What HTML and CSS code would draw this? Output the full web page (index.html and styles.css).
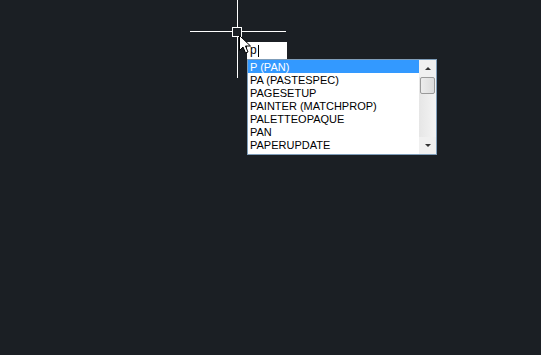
FILE: index.html
```html
<!DOCTYPE html>
<html lang="en">
<head>
  <meta charset="UTF-8" />
  <title>Drawing - Command Input</title>
  <link rel="stylesheet" href="styles.css">
</head>
<body>
  <div class="canvas">
    <div class="cross-h"></div>
    <div class="cross-v"></div>
    <div class="pickbox"></div>

    <div class="command">
      <div class="cmd-input">p<span class="caret"></span></div>
      <div class="suggest">
        <ul class="items">
          <li class="selected">P (PAN)</li>
          <li>PA (PASTESPEC)</li>
          <li>PAGESETUP</li>
          <li>PAINTER (MATCHPROP)</li>
          <li>PALETTEOPAQUE</li>
          <li>PAN</li>
          <li>PAPERUPDATE</li>
        </ul>
        <div class="scrollbar">
          <div class="arrow up"></div>
          <div class="track"><div class="thumb"></div></div>
          <div class="arrow down"></div>
        </div>
      </div>
    </div>

    <svg class="pointer" width="14" height="20" viewBox="0 0 14 20">
      <path d="M0.5 0.5 L0.5 15.5 L4 12 L6.5 18 L9 17 L6.5 11 L11.5 11 Z" fill="#fff" stroke="#000" stroke-width="1"/>
    </svg>
  </div>
</body>
</html>
```

FILE: styles.css
```css
body {
  margin: 0;
  background: #1b1f24;
  font-family: 'Liberation Sans', Arial, sans-serif;
}

.canvas {
  position: relative;
  width: 541px;
  height: 355px;
  overflow: hidden;
}

.cross-h {
  position: absolute;
  left: 190px;
  top: 31px;
  width: 96px;
  height: 1px;
  background: #fff;
}

.cross-v {
  position: absolute;
  left: 237px;
  top: 0;
  width: 1px;
  height: 78px;
  background: #fff;
}

.pickbox {
  position: absolute;
  left: 232px;
  top: 27px;
  width: 8px;
  height: 8px;
  border: 1px solid #fff;
  background: #1b1f24;
}

.command {
  position: absolute;
  left: 247px;
  top: 42px;
}

.cmd-input {
  width: 37px;
  height: 17px;
  background: #fff;
  color: #000;
  font-size: 12px;
  line-height: 17px;
  padding-left: 3px;
  display: flex;
  align-items: center;
}

.caret {
  display: inline-block;
  width: 1px;
  height: 12px;
  background: #000;
  margin-left: 1px;
}

.suggest {
  display: flex;
  width: 188px;
  height: 94px;
  border: 1px solid #7f9db9;
  background: #fff;
}

.items {
  list-style: none;
  margin: 0;
  padding: 0;
  flex: 1;
}

.items li {
  height: 13px;
  line-height: 14px;
  font-size: 11px;
  color: #000;
  padding-left: 2px;
}

.items li.selected {
  background: #3399ff;
  color: #fff;
}

.scrollbar {
  width: 17px;
  display: flex;
  flex-direction: column;
  background: #f0f0f0;
}

.arrow {
  height: 17px;
  display: flex;
  justify-content: center;
  align-items: center;
}

.arrow::before {
  content: "";
  border-left: 3px solid transparent;
  border-right: 3px solid transparent;
}

.arrow.up::before {
  border-bottom: 3px solid #333;
}

.arrow.down::before {
  border-top: 3px solid #333;
}

.track {
  flex: 1;
  background: linear-gradient(to right, #e6e6e6, #f4f4f4);
}

.thumb {
  height: 15px;
  margin: 0 1px;
  border: 1px solid #9a9a9a;
  border-radius: 2px;
  background: linear-gradient(to right, #ececec, #dcdcdc);
}

.pointer {
  position: absolute;
  left: 239px;
  top: 35px;
}
```
